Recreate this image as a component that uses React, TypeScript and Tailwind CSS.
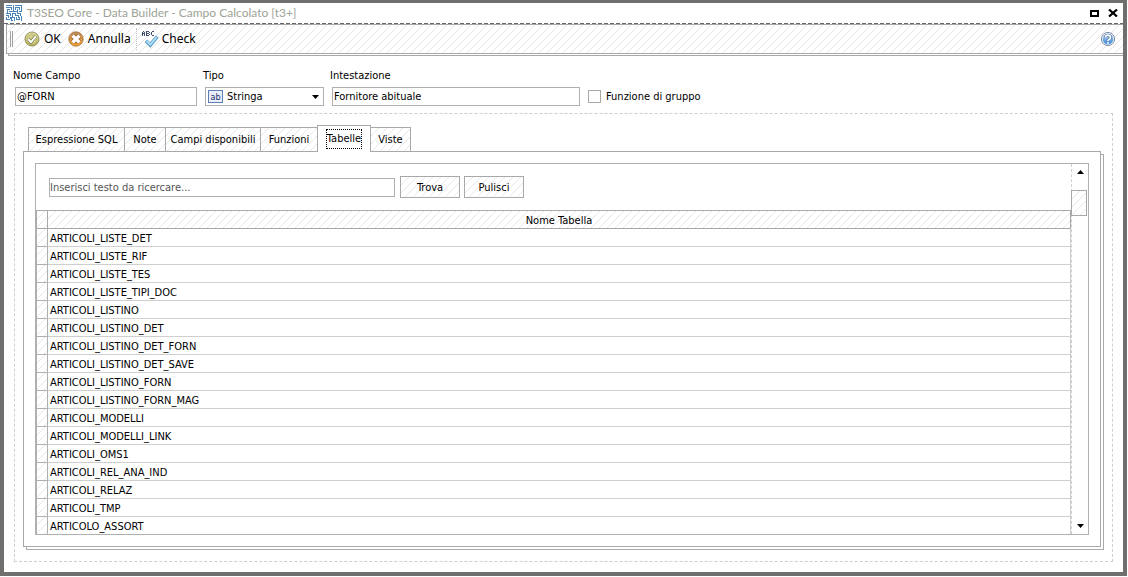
import React from 'react';

const HATCH =
  'bg-[linear-gradient(135deg,transparent_46%,#e7e7e7_46%,#e7e7e7_54%,transparent_54%)] bg-[length:8px_8px]';
const FIELD = 'h-[19px] border border-[#b0b0b0] bg-white';

const ROWS = [
  'ARTICOLI_LISTE_DET',
  'ARTICOLI_LISTE_RIF',
  'ARTICOLI_LISTE_TES',
  'ARTICOLI_LISTE_TIPI_DOC',
  'ARTICOLI_LISTINO',
  'ARTICOLI_LISTINO_DET',
  'ARTICOLI_LISTINO_DET_FORN',
  'ARTICOLI_LISTINO_DET_SAVE',
  'ARTICOLI_LISTINO_FORN',
  'ARTICOLI_LISTINO_FORN_MAG',
  'ARTICOLI_MODELLI',
  'ARTICOLI_MODELLI_LINK',
  'ARTICOLI_OMS1',
  'ARTICOLI_REL_ANA_IND',
  'ARTICOLI_RELAZ',
  'ARTICOLI_TMP',
  'ARTICOLO_ASSORT',
];

const TABS = [
  { label: 'Espressione SQL', width: 'w-[97px]' },
  { label: 'Note', width: 'w-[42px]' },
  { label: 'Campi disponibili', width: 'w-[96px]' },
  { label: 'Funzioni', width: 'w-[58px]' },
  { label: 'Tabelle', width: 'w-[54px]' },
  { label: 'Viste', width: 'w-[41px]' },
];

function AppLogo() {
  return (
    <svg width="16" height="16" viewBox="0 0 16 16" fill="none" stroke="#4a86bd" shapeRendering="crispEdges">
      <path d="M0 .5h6M7.500 0v4M9 .5h7M0 2.500h6M5.500 2v3M9.500 2v3M9 2.500h5M13.500 2v3M15.500 0v6M1.500 4v4M1 4.500h3M3 6.500h6M7.500 4v3M11.500 4v4M9 6.500h3M13 6.500h3M0 8.500h5M4.500 8v3M6.500 8v4M6 8.500h4M9.500 8v3M11 8.500h4M14.500 8v3M0 10.500h3M2.500 10v3M9 10.500h4M12.500 10v3M0 12.500h1M4 12.500h5M8.500 12v4M10.500 12v3M10 14.500h4M13.500 12v3M15.500 11v5M.5 12v3M0 14.500h4M5.500 13v3M5 15.500h2M4.500 12v2" />
    </svg>
  );
}

function OkIcon() {
  return (
    <svg width="16" height="16" viewBox="0 0 16 16">
      <defs>
        <linearGradient id="okFill" x1="0" y1="0" x2="0" y2="1">
          <stop offset="0" stopColor="#ebe6b0" />
          <stop offset="1" stopColor="#aeab50" />
        </linearGradient>
      </defs>
      <circle cx="8" cy="8" r="7" fill="url(#okFill)" stroke="#93925e" />
      <circle cx="8" cy="8" r="5.200" fill="#cfcd88" stroke="#bab672" strokeWidth=".6" />
      <path d="M4.300 8.200l2.700 2.900 4.800-5.800" fill="none" stroke="#75754a" strokeWidth="3.200" />
      <path d="M4.300 8.200l2.700 2.900 4.800-5.800" fill="none" stroke="#fff" strokeWidth="2" />
    </svg>
  );
}

function CancelIcon() {
  return (
    <svg width="16" height="16" viewBox="0 0 16 16">
      <defs>
        <linearGradient id="cancelFill" x1="0" y1="0" x2="0" y2="1">
          <stop offset="0" stopColor="#b98a5c" />
          <stop offset="1" stopColor="#f6a02a" />
        </linearGradient>
      </defs>
      <circle cx="8" cy="8" r="7.200" fill="url(#cancelFill)" stroke="#a0703c" strokeWidth=".8" />
      <path d="M4.600 4.600l6.800 6.800M11.400 4.600l-6.800 6.800" stroke="#94653a" strokeWidth="4.600" />
      <path d="M4.600 4.600l6.800 6.800M11.400 4.600l-6.800 6.800" stroke="#fff" strokeWidth="3.400" />
    </svg>
  );
}

function SpellIcon() {
  return (
    <svg width="17" height="17" viewBox="0 0 17 17" fill="none">
      <g stroke="#40506e" strokeWidth="1" shapeRendering="crispEdges">
        <path d="M.5 5V1M1 .5h1M2.500 1v4M1 2.500h1" />
        <path d="M4.500 0v5M5 .5h1.500M5 2.500h1.500M5 4.500h1.500M7 1v1M7 3v1" />
        <path d="M9.500 1v3M10 .5h2M10 4.500h2" />
      </g>
      <path d="M4 9.700l4.300 4.300 7-8.300" stroke="#4e8fc4" strokeWidth="3.600" />
      <path d="M4.500 9.900l3.800 3.800 6.500-7.700" stroke="#a9dcf5" strokeWidth="2.200" />
    </svg>
  );
}

function HelpIcon() {
  return (
    <svg width="16" height="16" viewBox="0 0 16 16">
      <defs>
        <linearGradient id="helpFill" x1="0" y1="0" x2="0" y2="1">
          <stop offset="0" stopColor="#c3d8ee" />
          <stop offset="1" stopColor="#3a84d4" />
        </linearGradient>
      </defs>
      <circle cx="8" cy="8" r="6.600" fill="#eef3f8" stroke="#7d8fa8" />
      <circle cx="8" cy="8" r="5.400" fill="url(#helpFill)" />
      <path d="M5.500 6.700c0-3.400 5-3.400 5 0 0 2-2.500 1.600-2.500 3.300" fill="none" stroke="#4f7bb0" strokeWidth="3" />
      <path d="M5.500 6.700c0-3.400 5-3.400 5 0 0 2-2.500 1.600-2.500 3.300" fill="none" stroke="#fff" strokeWidth="1.600" />
      <circle cx="8" cy="12" r="1" fill="#fff" />
    </svg>
  );
}

export default function App() {
  const [active, setActive] = React.useState('Tabelle');

  return (
    <div className="flex h-screen bg-white pr-px pb-px font-['DejaVu_Sans_Condensed','DejaVu_Sans',sans-serif] text-[11px] leading-[14px] text-black">
      <div className="flex min-w-0 flex-1 flex-col border-4 border-t-3 border-[#706f6e]">
        <header className="flex h-5 shrink-0 items-center pr-[5px] pl-[2px]">
          <AppLogo />
          <h1 className="ml-[5px] flex-1 font-[Lato,sans-serif] text-[12px] text-[#9da396]">
            T3SEO Core - Data Builder - Campo Calcolato [t3+]
          </h1>
          <button aria-label="Ingrandisci" className="mr-[9px]">
            <svg width="9" height="7" viewBox="0 0 9 7" className="block">
              <path d="M1 1h7v5h-7z" fill="none" stroke="#000" strokeWidth="2" />
            </svg>
          </button>
          <button aria-label="Chiudi">
            <svg width="10" height="8" viewBox="0 0 10 8" className="block">
              <path d="M1 .5l8 7M9 .5l-8 7" stroke="#000" strokeWidth="2.200" />
            </svg>
          </button>
        </header>
        <div className="h-px shrink-0 bg-[repeating-linear-gradient(90deg,#666_0,#666_4px,#fff_4px,#fff_6px)]" />

        <div
          role="toolbar"
          className={`ml-[2px] flex h-[30px] shrink-0 items-center border border-r-0 border-[#a8a8a8] pr-[7px] pl-[3px] font-['Noto_Sans',sans-serif] text-[12px] ${HATCH}`}
        >
          <div className="mr-[11px] h-4 w-[3px] border-x border-[#a0a0a0]" />
          <button className="mr-[7px] flex items-center gap-1">
            <OkIcon />
            OK
          </button>
          <button className="mr-[5px] flex items-center gap-1">
            <CancelIcon />
            Annulla
          </button>
          <div className="mr-[5px] h-[22px] border-l border-dotted border-[#c0c0c0]" />
          <button className="flex items-center gap-[3px]">
            <SpellIcon />
            Check
          </button>
          <button aria-label="Guida" className="ml-auto">
            <HelpIcon />
          </button>
        </div>
        <div className="ml-1 h-[2px] shrink-0 border-b border-l border-[#a8a8a8]" />

        <form className="mt-[13px] flex shrink-0 items-end gap-2 pl-[11px]" onSubmit={(e) => e.preventDefault()}>
          <div className="flex flex-col gap-1">
            <label htmlFor="nome" className="-ml-[2px]">Nome Campo</label>
            <input id="nome" defaultValue="@FORN" className={`w-[182px] px-px ${FIELD}`} />
          </div>
          <div className="flex flex-col gap-1">
            <label htmlFor="tipo" className="-ml-[2px]">Tipo</label>
            <div className={`flex w-[119px] items-center pr-1 pl-[2px] ${FIELD}`}>
              <svg width="15" height="13" viewBox="0 0 15 13" className="shrink-0" aria-hidden="true">
                <rect x=".5" y=".5" width="14" height="12" fill="#e8eefa" stroke="#5b7fb5" />
                <text x="7.500" y="9.500" textAnchor="middle" fontSize="9" fill="#1d2f6f">ab</text>
              </svg>
              <select id="tipo" className="ml-1 flex-1 appearance-none bg-transparent">
                <option>Stringa</option>
              </select>
              <svg width="7" height="4" viewBox="0 0 7 4" className="shrink-0" aria-hidden="true">
                <path d="M0 0h7l-3.500 4z" />
              </svg>
            </div>
          </div>
          <div className="flex flex-col gap-1">
            <label htmlFor="intestazione" className="-ml-[2px]">Intestazione</label>
            <input id="intestazione" defaultValue="Fornitore abituale" className={`w-[248px] px-px ${FIELD}`} />
          </div>
          <label className="flex h-[19px] items-center gap-[5px]">
            <input type="checkbox" className="size-[13px] appearance-none border border-[#a8a8a8] bg-white checked:bg-[#888]" />
            Funzione di gruppo
          </label>
        </form>

        <main className="mx-[10px] mt-[7px] mb-[10px] flex min-h-0 flex-1 flex-col border border-dashed border-[#cfcfcf] pr-[11px] pb-[14px] pl-[8px]">
          <div role="tablist" className="mt-[11px] flex shrink-0 items-end pl-[5px]">
            {TABS.map(({ label, width }) => {
              const selected = label === active;
              return (
                <button
                  key={label}
                  role="tab"
                  aria-selected={selected}
                  onClick={() => setActive(label)}
                  className={`relative -mr-px flex items-center justify-center border border-[#a8a8a8] whitespace-nowrap ${width} ${
                    selected ? 'z-10 -mb-px h-[27px] border-b-0 bg-white' : `h-6 border-b-0 pt-px ${HATCH}`
                  }`}
                >
                  <span className={selected ? 'border border-dotted border-black py-[2px]' : ''}>{label}</span>
                </button>
              );
            })}
          </div>

          <div className="relative flex min-h-0 flex-1 flex-col">
            <div className="absolute top-[3px] -right-[3px] -bottom-[3px] left-[3px] border border-[#a8a8a8]" />
            <section role="tabpanel" className="relative flex min-h-0 flex-1 flex-col border border-[#a8a8a8] bg-white p-[11px]">
              <div className="flex min-h-0 flex-1 border border-[#b0b0b0]">
                <div className="flex min-w-0 flex-1 flex-col overflow-hidden">
                  <div className="mt-3 mb-3 flex shrink-0 items-center gap-1 pl-[13px]">
                    <input
                      aria-label="Testo da ricercare"
                      placeholder="Inserisci testo da ricercare..."
                      className={`mr-px w-[346px] placeholder:text-[#555] ${FIELD}`}
                    />
                    <button className={`h-[22px] w-[60px] border border-[#a8a8a8] pt-px ${HATCH}`}>Trova</button>
                    <button className={`h-[22px] w-[60px] border border-[#a8a8a8] pt-px ${HATCH}`}>Pulisci</button>
                  </div>
                  <table className="w-full table-fixed border-separate border-spacing-0">
                    <thead>
                      <tr className="h-[19px]">
                        <th aria-label="Indicatore" className={`w-3 border border-[#a8a8a8] p-0 ${HATCH}`} />
                        <th className={`border border-l-0 border-[#a8a8a8] px-0 pt-[2px] pb-0 text-center font-normal ${HATCH}`}>
                          Nome Tabella
                        </th>
                      </tr>
                    </thead>
                    <tbody>
                      {ROWS.map((name) => (
                        <tr key={name} className="h-[18px]">
                          <td className={`border-x border-b border-[#b0b0b0] p-0 ${HATCH}`} />
                          <td className="border-r border-b border-[#cfcfcf] pt-[2px] pr-0 pb-0 pl-[2px]">{name}</td>
                        </tr>
                      ))}
                    </tbody>
                  </table>
                </div>
                <div className="flex w-[17px] shrink-0 flex-col items-center border-l border-dashed border-[#cfcfcf] py-[6px]">
                  <svg width="7" height="4" viewBox="0 0 7 4" className="shrink-0">
                    <path d="M0 4h7l-3.500-4z" />
                  </svg>
                  <div className={`mt-4 -ml-px h-[26px] w-4 shrink-0 self-start border border-[#a8a8a8] ${HATCH}`} />
                  <svg width="7" height="4" viewBox="0 0 7 4" className="mt-auto shrink-0">
                    <path d="M0 0h7l-3.500 4z" />
                  </svg>
                </div>
              </div>
            </section>
          </div>
        </main>
      </div>
    </div>
  );
}
